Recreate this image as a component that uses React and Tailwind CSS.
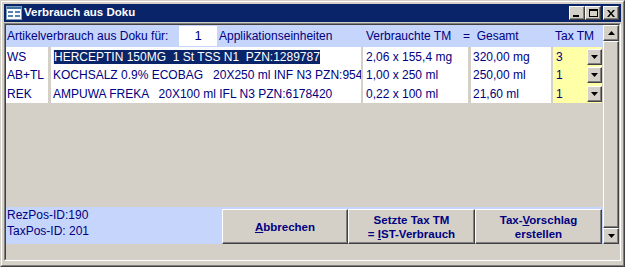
const font = { fontFamily: '"Liberation Sans", Arial, sans-serif' };

const DownArrow = () => (
  <svg width="7" height="4" viewBox="0 0 7 4">
    <path d="M0 0h7L3.5 4z" fill="#000" />
  </svg>
);

const UpArrow = () => (
  <svg width="7" height="4" viewBox="0 0 7 4">
    <path d="M0 4h7L3.5 0z" fill="#000" />
  </svg>
);

const Raised = ({ className = '', children }) => (
  <div
    className={`bg-[#d4d0c8] border border-t-white border-l-white border-r-[#404040] border-b-[#404040] shadow-[inset_-1px_-1px_0_#808080] flex items-center justify-center ${className}`}
  >
    {children}
  </div>
);

const CaptionButton = ({ children, className = '' }) => (
  <Raised className={`w-[16px] h-[14px] ${className}`}>{children}</Raised>
);

const FormIcon = () => (
  <svg width="16" height="16" viewBox="0 0 16 16">
    <rect x="0.5" y="1.5" width="15" height="13" fill="#fff" stroke="#7f9db9" />
    <rect x="1" y="2" width="14" height="2" fill="#3a6ea5" />
    <rect x="2" y="6" width="5" height="2" fill="#5a7fb5" />
    <rect x="9" y="6" width="5" height="2" fill="#5a7fb5" />
    <rect x="2" y="10" width="5" height="2" fill="#5a7fb5" />
    <rect x="9" y="10" width="5" height="2" fill="#5a7fb5" />
  </svg>
);

const rows = [
  { label: 'WS', product: 'HERCEPTIN 150MG  1 St TSS N1  PZN:1289787', verb: '2,06 x 155,4 mg', total: '320,00 mg', tax: '3', h: 'h-[19px]', selected: true },
  { label: 'AB+TL', product: 'KOCHSALZ 0.9% ECOBAG   20X250 ml INF N3 PZN:954', verb: '1,00 x 250 ml', total: '250,00 ml', tax: '1', h: 'h-[18px]' },
  { label: 'REK', product: 'AMPUWA FREKA   20X100 ml IFL N3 PZN:6178420', verb: '0,22 x 100 ml', total: '21,60 ml', tax: '1', h: 'h-[19px]' },
];

export default function App() {
  return (
    <div className="w-[625px] h-[267px] border border-t-[#d4d0c8] border-l-[#d4d0c8] border-r-[#404040] border-b-[#404040] bg-[#d4d0c8]" style={font}>
      <div className="h-full border border-t-white border-l-white border-r-[#808080] border-b-[#808080] pt-[2px] px-[2px] pb-[4px] flex flex-col">
        {/* title bar */}
        <div className="h-[18px] bg-[#0a246a] flex items-center pl-[2px] pr-[2px]">
          <FormIcon />
          <span className="ml-[2px] text-white font-bold text-[11.5px] leading-none">Verbrauch aus Doku</span>
          <div className="ml-auto flex items-center">
            <CaptionButton>
              <div className="w-[6px] h-[2px] bg-black mt-[6px] mr-[2px]" />
            </CaptionButton>
            <CaptionButton>
              <div className="w-[9px] h-[8px] border border-black border-t-2" />
            </CaptionButton>
            <CaptionButton className="ml-[2px]">
              <svg width="8" height="7" viewBox="0 0 8 7">
                <path d="M0 0h2l2 2.5L6 0h2L5 3.5 8 7H6L4 4.5 2 7H0l3-3.5z" fill="#000" />
              </svg>
            </CaptionButton>
          </div>
        </div>

        {/* client area */}
        <div className="mt-[1px] flex-1 border border-t-[#808080] border-l-[#808080] border-r-white border-b-white">
          <div className="h-full border border-t-[#404040] border-l-[#404040] border-r-[#d4d0c8] border-b-[#d4d0c8] bg-[#d4d0c8] text-[12px] text-[#000080]">
            <div className="flex h-[219px]">
              <div className="w-[597px] flex flex-col">
                {/* header */}
                <div className="h-[22px] bg-[#c6d5fc] flex items-center whitespace-pre">
                  <div className="w-[173px] pl-[1px]">Artikelverbrauch aus Doku für:</div>
                  <div className="w-[38px] h-[20px] bg-white flex items-center justify-center text-[13px]">1</div>
                  <div className="w-[146px] pl-[2px]">Applikationseinheiten</div>
                  <div className="w-[100px] pl-[3px]">Verbrauchte TM</div>
                  <div className="w-[90px]">=  Gesamt</div>
                  <div className="pl-[2px]">Tax TM</div>
                </div>

                {/* rows */}
                {rows.map((r) => (
                  <div key={r.label} className={`flex ${r.h} whitespace-pre`}>
                    <div className="w-[42px] bg-white pl-[1px] flex items-center">{r.label}</div>
                    <div className="w-[310px] ml-[3px] bg-white pl-[2px] flex items-center overflow-hidden">
                      {r.selected ? (
                        <span className="bg-[#0a246a] text-white leading-[14px] border-l border-l-[#ffff40]">{r.product}</span>
                      ) : (
                        <span>{r.product}</span>
                      )}
                    </div>
                    <div className="w-[105px] ml-[2px] bg-white pl-[3px] flex items-center">{r.verb}</div>
                    <div className="w-[80px] ml-[3px] bg-white pl-[2px] flex items-center">{r.total}</div>
                    <div className="w-[49px] ml-[2px] bg-[#ffffa8] pl-[3px] flex items-center justify-between">
                      <span>{r.tax}</span>
                      <Raised className="w-[15px] h-[16px]">
                        <DownArrow />
                      </Raised>
                    </div>
                  </div>
                ))}

                <div className="flex-1" />

                {/* footer */}
                <div className="h-[37px] bg-[#c6d5fc] flex">
                  <div className="w-[216px] pl-[1px] leading-[16px]">
                    <div>RezPos-ID:190</div>
                    <div>TaxPos-ID: 201</div>
                  </div>
                  <div className="flex mt-[2px] h-[35px] font-bold text-[11.5px] leading-[14px] text-center">
                    <Raised className="w-[126px] h-full">
                      <span><u>A</u>bbrechen</span>
                    </Raised>
                    <Raised className="w-[127px] h-full">
                      <span>Setzte Tax TM<br />= <u>I</u>ST-Verbrauch</span>
                    </Raised>
                    <Raised className="w-[127px] h-full">
                      <span>Tax-<u>V</u>orschlag<br />erstellen</span>
                    </Raised>
                  </div>
                </div>
              </div>

              {/* scrollbar */}
              <div className="w-[16px] flex flex-col">
                <Raised className="h-[16px]">
                  <UpArrow />
                </Raised>
                <Raised className="flex-1" />
                <Raised className="h-[16px]">
                  <DownArrow />
                </Raised>
              </div>
            </div>
          </div>
        </div>
      </div>
    </div>
  );
}
